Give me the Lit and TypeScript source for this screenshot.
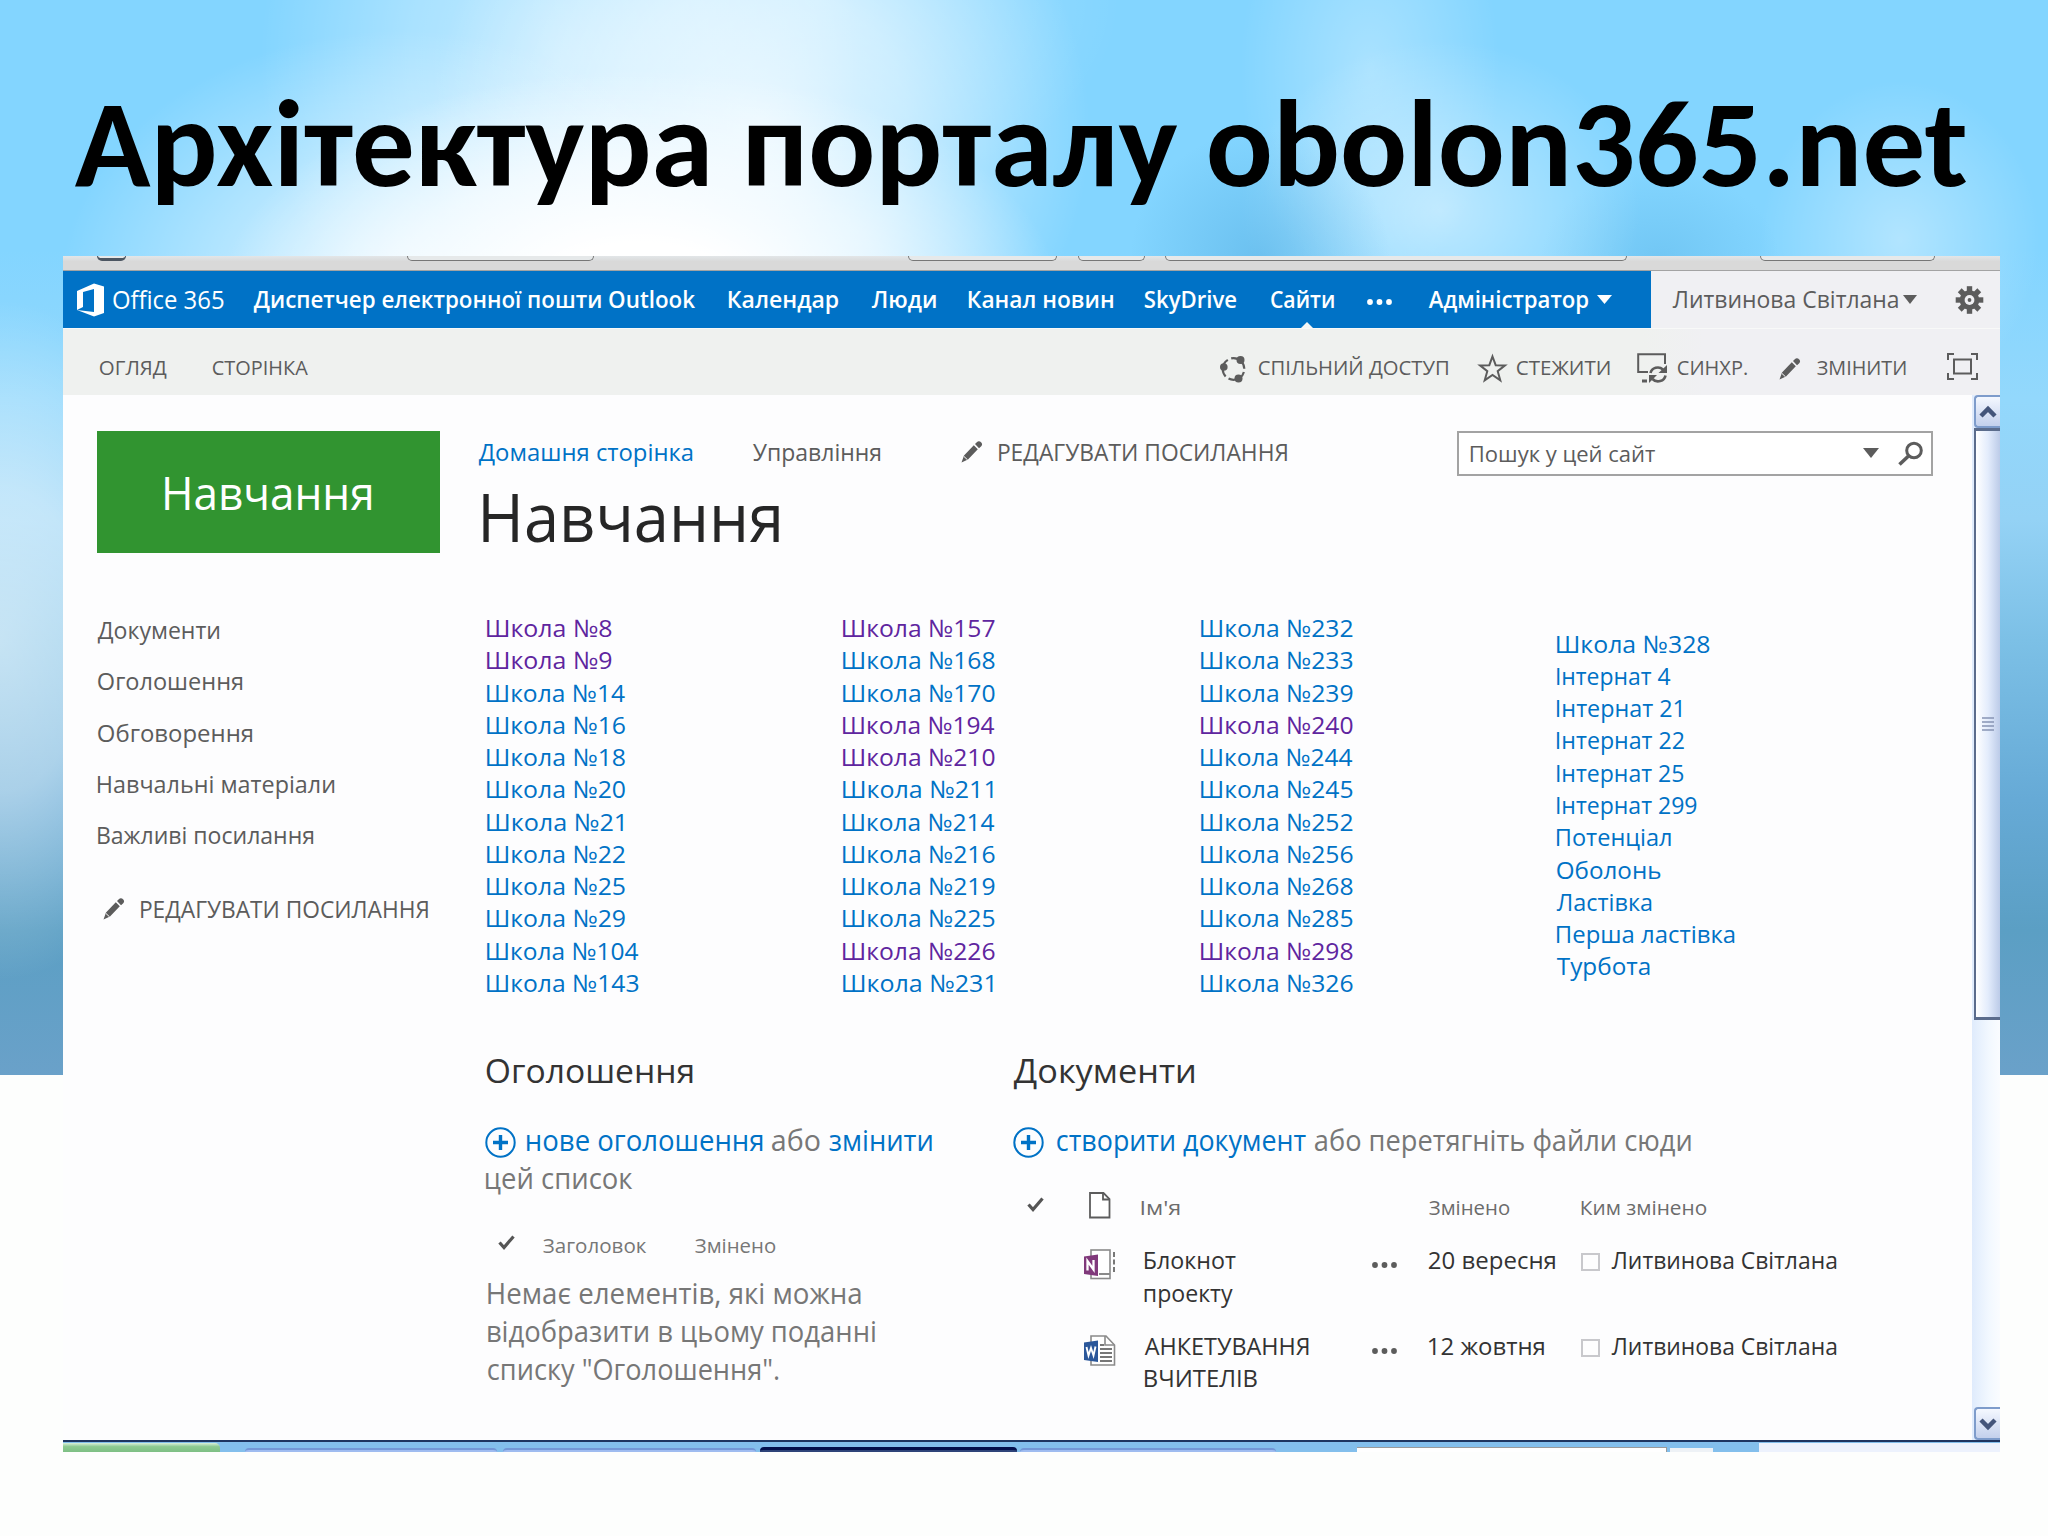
import { LitElement, html, css, svg } from "lit";
import { customElement, property } from "lit/decorators.js";
import { styleMap } from "lit/directives/style-map.js";

const pen = document.createElement("canvas").getContext("2d")!;

/** One line of text whose inked width is fitted to `w` pixels. */
@customElement("fit-text")
class FitText extends LitElement {
  static styles = css`
    :host { display: block; white-space: nowrap; }
    .run { display: block; transform-origin: 0 0; width: max-content; }
  `;
  @property() text = "";
  @property({ type: Number }) w = 0;

  updated() {
    const run = this.renderRoot.querySelector(".run") as HTMLElement;
    const cs = getComputedStyle(this);
    pen.font = `${cs.fontWeight} ${cs.fontSize} ${cs.fontFamily}`;
    const m = pen.measureText(this.text);
    const ink = m.actualBoundingBoxLeft + m.actualBoundingBoxRight;
    const k = this.w / ink;
    run.style.transform = `translateX(${(m.actualBoundingBoxLeft * k + 0.8).toFixed(2)}px) scaleX(${k.toFixed(4)})`;
  }
  render() {
    return html`<span class="run" style=${styleMap({ width: `${this.w}px` })}>${this.text}</span>`;
  }
}

const t = (text: string, w: number, cls = "") =>
  html`<fit-text class=${cls} .text=${text} .w=${w}></fit-text>`;

const pencil = html`<svg class="icon" width="22" height="22" viewBox="0 0 22 22">
  <path fill="#5c5c5c" d="M0.500 21.500 L3 14.500 L12.800 4.200 L16.800 8.200 L7 18.500 Z M14 3 L15.800 1.200 Q18 -0.600 20.300 1.500 Q22 3.600 20 5.500 L18 7.200 Z"/>
  <path d="M3 15.500 L6.500 18.800" stroke="#fff" stroke-width="1"/></svg>`;

const plus = html`<svg class="icon" width="31" height="31" viewBox="0 0 31 31">
  <circle cx="15.500" cy="15.500" r="14.200" fill="none" stroke="#0072c6" stroke-width="2"/>
  <path d="M15.500 8v15M8 15.500h15" stroke="#0072c6" stroke-width="3.400"/></svg>`;

const check = html`<svg class="icon check" width="17" height="15" viewBox="0 0 17 15">
  <path d="M1.500 7.500 L6 12.500 L15.500 1.500" fill="none" stroke="#555" stroke-width="3.200"/></svg>`;

const dots = (color: string) => html`<svg class="icon dots" width="27" height="8" viewBox="0 0 27 8">
  ${[4, 13.5, 23].map((x) => svg`<circle cx=${x} cy="4" r="2.900" fill=${color}/>`)}</svg>`;

const caret = (color: string, w: number, h: number) =>
  html`<svg class="icon" width=${w} height=${h} viewBox="0 0 16 10" preserveAspectRatio="none"><path fill=${color} d="M0 0h16L8 10Z"/></svg>`;

const officeLogo = html`<svg class="icon" width="29" height="34" viewBox="0 0 29 34">
  <path fill="#fff" d="M1 8 L18 0.500 L28 3.500 V30 L18 33.500 L1 27 L18 29 V6 L7 9 V24 L1 27 Z"/></svg>`;

const gear = html`<svg class="icon" width="29" height="28" viewBox="-14.500 -14 29 28">
  ${[0, 45, 90, 135].map((a) => svg`<rect x="-2.700" y="-13.800" width="5.400" height="27.600" fill="#5c5c5c" transform="rotate(${a})"/>`)}
  <circle r="7.300" fill="none" stroke="#5c5c5c" stroke-width="5"/><circle r="4.900" fill="#f0f0f3"/>
  <circle r="1.900" fill="#5c5c5c"/></svg>`;

const share = html`<svg class="icon" width="27" height="28" viewBox="0 0 27 28">
  <circle cx="13.500" cy="14" r="10.800" fill="none" stroke="#5c5c5c" stroke-width="2.200" stroke-dasharray="19 3.600" stroke-dashoffset="-3"/>
  <g fill="#5c5c5c"><circle cx="3.800" cy="12" r="3.800"/><circle cx="20.500" cy="5" r="4"/><circle cx="18.500" cy="23.500" r="4"/></g></svg>`;

const star = html`<svg class="icon" width="29" height="29" viewBox="0 0 29 29">
  <path fill="none" stroke="#5c5c5c" stroke-width="2" d="M14.500 2.500 L17.700 11.200 L27 11.400 L19.700 17.200 L22.300 26.300 L14.500 21 L6.700 26.300 L9.300 17.200 L2 11.400 L11.300 11.200 Z"/></svg>`;

const sync = html`<svg class="icon" width="31" height="31" viewBox="0 0 31 31">
  <g fill="none" stroke="#5c5c5c" stroke-width="2"><path d="M11 19H1.200V1.200H28V11"/><path d="M5 28H10" stroke-width="3"/>
  <path stroke-width="2.600" d="M13.500 20a7.500 7 0 0 1 12.500-3.500M28.500 22.500a7.500 7 0 0 1-13 3.500"/></g>
  <path fill="#5c5c5c" d="M30 12v8h-8.500zM12 30v-8h8z"/></svg>`;

const focus = html`<svg class="icon" width="31" height="27" viewBox="0 0 31 27">
  <g fill="none" stroke="#5c5c5c" stroke-width="2"><path d="M7 1H1V7M24 1H30V7M7 26H1V20M24 26H30V20"/><rect x="7" y="6.500" width="17" height="14"/></g></svg>`;

const magnifier = html`<svg class="icon" width="25" height="25" viewBox="0 0 25 25">
  <circle cx="16" cy="9.500" r="7.300" fill="none" stroke="#5c5c5c" stroke-width="3"/><path d="M10.500 15L1.500 23.500" stroke="#5c5c5c" stroke-width="3.600"/></svg>`;

const page = html`<svg class="icon" width="22" height="27" viewBox="0 0 22 27">
  <path fill="#fff" stroke="#5c5c5c" stroke-width="1.800" d="M1 1H14.500L20.500 7V25.500H1Z"/><path fill="none" stroke="#5c5c5c" stroke-width="1.800" d="M14 1V7.500H21"/></svg>`;

const oneNote = html`<svg class="icon" width="32" height="31" viewBox="0 0 32 31">
  <rect x="7" y="1" width="19" height="28.500" fill="#fff" stroke="#8a8a8a" stroke-width="1.600"/>
  <path d="M15 25H26" stroke="#8a8a8a" stroke-width="2"/><path d="M30 3V24" stroke="#777" stroke-width="2" stroke-dasharray="5 2.500"/>
  <path fill="#80397b" d="M0 7.500L14 5.500V27L0 25Z"/><path fill="none" stroke="#fff" stroke-width="2.300" d="M3.500 21.500V12L9.500 20.500V11"/></svg>`;

const word = html`<svg class="icon" width="32" height="31" viewBox="0 0 32 31">
  <path fill="#fff" stroke="#8a8a8a" stroke-width="1.600" d="M7 1H22L30.500 10V30H7Z"/><path d="M21 1V10H30" fill="none" stroke="#8a8a8a" stroke-width="1.600"/>
  <path d="M16 10H20M16 14H28M16 18H28M16 22H28M16 26H28" stroke="#777" stroke-width="1.800"/>
  <path fill="#2b579a" d="M0 7.500L14 5.500V27L0 25Z"/><path fill="none" stroke="#fff" stroke-width="1.900" d="M2.500 12L4.500 20.500L7 13L9.500 20.500L11.500 11.500"/></svg>`;

const visited = new Set(["8", "9", "157", "194", "210", "226", "240", "298"]);
const schools = [
  ["8", "9", "14", "16", "18", "20", "21", "22", "25", "29", "104", "143"],
  ["157", "168", "170", "194", "210", "211", "214", "216", "219", "225", "226", "231"],
  ["232", "233", "239", "240", "244", "245", "252", "256", "268", "285", "298", "326"],
];
const schoolWidth = (n: string) => [0, 125, 138.5, 152][n.length] - (n.endsWith("1") ? 2 : 0);
const others: [string, number][] = [
  ["Школа №328", 153], ["Інтернат 4", 114], ["Інтернат 21", 124.5], ["Інтернат 22", 127.5], ["Інтернат 25", 127],
  ["Інтернат 299", 140], ["Потенціал", 114], ["Оболонь", 103.5], ["Ластівка", 95], ["Перша ластівка", 178], ["Турбота", 93],
];
const sideLinks: [string, number][] = [
  ["Документи", 122], ["Оголошення", 145], ["Обговорення", 155], ["Навчальні матеріали", 237], ["Важливі посилання", 216],
];
const files = [
  { icon: oneNote, name: [["Блокнот", 91], ["проекту", 88]] as [string, number][], date: "20 вересня", dateW: 126 },
  { icon: word, name: [["АНКЕТУВАННЯ", 164], ["ВЧИТЕЛІВ", 112]] as [string, number][], date: "12 жовтня", dateW: 115 },
];

@customElement("app-root")
class AppRoot extends LitElement {
  static styles = css`
    :host { display: block; width: 2048px; height: 1536px; overflow: hidden; background: #fdfefd;
      font-family: "Open Sans", "Noto Sans", sans-serif; color: #5c5c5c; }
    * { box-sizing: border-box; }
    .icon { display: block; overflow: visible; }
    .slide { height: 1536px; background-repeat: no-repeat; background-size: 2048px 1075px;
      background-image:
        radial-gradient(ellipse 420px 230px at 640px 300px, #fff 25%, #ffffffa0 60%, #fff0),
        radial-gradient(ellipse 340px 260px at 400px 290px, #ffffffb0 10%, #ffffff60 55%, #fff0),
        radial-gradient(ellipse 330px 330px at 760px 130px, #ffffffc0, #ffffff80 45%, #fff0),
        radial-gradient(ellipse 300px 330px at 560px 60px, #ffffff80, #ffffff50 50%, #fff0),
        radial-gradient(ellipse 300px 200px at 820px 0px, #ffffff50, #fff0),
        radial-gradient(ellipse 130px 130px at 1260px 260px, #4aa5db70, #4aa5db00),
        radial-gradient(ellipse 200px 170px at 1440px 210px, #ffffff78, #fff0),
        radial-gradient(ellipse 130px 220px at 1370px 70px, #ffffff50, #fff0),
        radial-gradient(ellipse 140px 160px at 1900px 240px, #ffffff60, #fff0),
        radial-gradient(ellipse 120px 90px at 1660px 260px, #5ab4e670, #5ab4e600),
        radial-gradient(ellipse 200px 340px at 0px 640px, #ffffff90, #ffffff70 45%, #fff0),
        linear-gradient(#83d5ff 0, #83d5ff 250px, #93d8fc 400px, #94d2f5 520px, #7cc0e6 640px, #66aad6 800px, #5b9fc4 930px, #6aa1c9 1075px);
    }
    .title { height: 256px; padding: 78px 0 0 74px; font: 700 124px/132px Carlito, Lato, "Open Sans", sans-serif; color: #000; margin: 0; }
    .panel { width: 1937px; margin-left: 63px; background: #fdfdfe; height: 1196px; display: flex; flex-direction: column; }

    .chrome { height: 15px; background: linear-gradient(#e2e6e8, #d9d9d9 40%); border-bottom: 1.500px solid #a3a3a3; display: grid;
      grid-template-columns: 34px 29px 281px 187px 314px 149px 21px 67px 20px 462px 133px 175px; align-items: start; }
    .tab { height: 5px; border: 1.500px solid #777; border-top: 0; border-radius: 0 0 6px 6px; background: #e6e9ea; }
    .tab.dark { border-color: #4c5662; border-bottom-width: 3px; }

    .suite { height: 57px; display: flex; line-height: 57px; }
    .blue { width: 1588px; background: #0072c6; color: #fff; padding-left: 13px; font-size: 23px; font-weight: 600; display: grid;
      grid-template-columns: 36px 141px 475px 143px 97px 176px 126px 96px 62px 169px 54px; align-items: center; }
    .brand { font-size: 26px; font-weight: 400; }
    .blue .dots { margin-top: 5px; }
    .current { position: relative; }
    .current::after { content: ""; position: absolute; left: 31px; bottom: 0; border: 6px solid transparent; border-top: 0; border-bottom: 6px solid #f5f7f6; }
    .user { flex: 1; background: #f0f0f3; padding-left: 21px; display: grid; grid-template-columns: 231px 52px 29px; align-items: center; font-size: 23px; }

    .ribbon { height: 67px; padding: 10px 0 0 36px; font-size: 20.500px; line-height: 55px;
      background: linear-gradient(90deg, #eff1ef 0, #eff1ef 1580px, #f0f0f3 1640px); border-top: 1px solid #f8f9f8;
      display: grid; grid-template-columns: 113px 1008px 38px 220px 38px 120.500px 40.500px 102px 37px 131px 31px; align-items: center; }
    .ribbon .icon { margin-top: 3px; }
    .ribbon .icon:last-child { margin-top: -2px; }

    .content { height: 1045px; display: flex; }
    .side { width: 415px; padding: 36px 0 0 34px; font-size: 24px; line-height: 51.300px; }
    .logo { width: 343px; height: 121.500px; background: #319430; color: #fff; font-size: 46px; line-height: 97px; padding: 13px 0 0 67px; margin-bottom: 51.500px; }
    .edit { display: grid; grid-template-columns: 37px auto; line-height: 36px; align-items: center; }
    .side .edit { margin: 31px 0 0 6px; }
    .center { width: 1494px; padding-top: 36px; }
    .top { height: 45px; display: grid; grid-template-columns: 274px 209px 496px 476px; font-size: 24px; line-height: 36px; align-items: start; }
    .lift { margin-top: 3px; }
    .link { color: #0072c6; }
    .seen { color: #5f259f; }
    .search { height: 45px; border: 2px solid #a3a3a3; background: #fff; display: grid; grid-template-columns: 11px 393px 35px 25px; align-items: center; font-size: 22.500px; line-height: 42px; }
    .search .icon { margin-top: -2px; }
    .head { font-size: 68px; line-height: 80px; color: #262626; padding-left: 4px; margin: 0; font-weight: 400; }
    .schools { margin: 56px 0 0 8px; display: grid; grid-template-columns: 356px 357.500px 356.500px auto; font-size: 24px; line-height: 32.270px; }
    .late { padding-top: 15.700px; }
    .parts { margin: 52px 0 0 7px; display: grid; grid-template-columns: 528px auto; font-size: 28.500px; line-height: 38px; color: #777; }
    .h2 { font-size: 33px; line-height: 40px; color: #333; margin: 0 0 29.500px 1px; font-weight: 400; }
    .docs .h2 { margin-left: 0; }
    .new { display: grid; grid-template-columns: 41px 245px 57px auto; align-items: center; height: 38px; }
    .docs .new { grid-template-columns: 43px 258px auto; }
    .new .icon { margin-top: 5px; }
    .cols { display: grid; grid-template-columns: 13px 44px 152px auto; font-size: 20.500px; line-height: 30px; margin: 33px 0 14.500px; align-items: center; }
    .cols .check { margin-top: -4px; }
    .empty { padding-left: 2px; }
    .row { display: grid; grid-template-columns: 71px 60px 227px 57px 153px 30px 226px; font-size: 23.500px; line-height: 32.500px; color: #333; margin-bottom: 20.600px; align-items: start; }
    .row.th { font-size: 20.500px; line-height: 30px; color: #6c6c6c; margin: 33.500px 0 22px; height: 30px; }
    .row .check { margin: 5px 0 0 14px; }
    .page { margin-left: 5px; }
    .file { margin-top: 5px; }
    .row .dots { margin-top: 17px; }
    .name { margin-left: -3px; }
    .box { width: 19px; height: 18px; border: 2px solid #c8c8cc; margin-top: 9px; }

    .scroll { width: 28px; background: linear-gradient(90deg, #dfebfc, #f2f8ff 60%, #fafcff); padding-left: 2px; display: flex; flex-direction: column; }
    .btn { height: 33px; border: 2px solid #7e9ccb; border-right: 0; border-radius: 4px 0 0 4px; background: linear-gradient(#f4f8ff, #c3d0ec); display: grid; place-items: center; }
    .thumb { height: 592px; border: 2px solid #5b6c8c; border-right: 0; border-top-width: 3px; border-bottom-width: 3px; background: linear-gradient(90deg, #fff, #e3ecfc 50%, #bccbe8); display: grid; place-items: center; }
    .space { flex: 1; }

    .task { height: 12px; border-top: 2.500px solid #1e3560; background: #83bfec; display: grid;
      grid-template-columns: 157px 25px 252px 6px 253px 4px 257px 3px 256px 81px 310px 3px 43px 46px 241px; align-items: end; }
    .start { height: 9.500px; background: linear-gradient(#d9efd9 0, #8dca92 40%, #7dbf84); border-radius: 0 5px 0 0; }
    .item { height: 4px; background: #9fbcf0; border-top: 2px solid #7397d6; border-radius: 4px 4px 0 0; }
    .item.on { height: 5px; background: #2e4479; border-top: 3px solid #04104c; }
    .field { height: 5px; background: #fff; border: 1.500px solid #9a9a9a; border-bottom: 0; border-left: 0; }
    .bit { height: 4px; background: #eef2f6; }
    .tray { height: 9.500px; background: #edf2fd; }
  `;

  render() {
    const g = html`<i></i>`;
    return html`
      <div class="slide">
        <h1 class="title">${t("Архітектура порталу obolon365.net", 1892)}</h1>
        <div class="panel">
          <div class="chrome">
            ${g}<div class="tab dark"></div>${g}<div class="tab"></div>${g}<div class="tab"></div>${g}<div class="tab"></div>${g}<div class="tab"></div>${g}<div class="tab"></div>
          </div>
          <div class="suite">
            <div class="blue">
              ${officeLogo}${t("Office 365", 111, "brand")}
              ${t("Диспетчер електронної пошти Outlook", 442)}${t("Календар", 110)}${t("Люди", 64)}
              ${t("Канал новин", 144)}${t("SkyDrive", 92)}${t("Сайти", 63, "current")}
              ${dots("#fff")}${t("Адміністратор", 160)}${caret("#fff", 15, 9)}
            </div>
            <div class="user">${t("Литвинова Світлана", 225)}${caret("#5c5c5c", 14, 9)}${gear}</div>
          </div>
          <div class="ribbon">
            ${t("ОГЛЯД", 67)}${t("СТОРІНКА", 95)}${share}${t("СПІЛЬНИЙ ДОСТУП", 189)}${star}${t("СТЕЖИТИ", 93)}
            ${sync}${t("СИНХР.", 69)}${pencil}${t("ЗМІНИТИ", 89)}${focus}
          </div>
          <div class="content">
            <div class="side">
              <div class="logo">${t("Навчання", 206.5)}</div>
              ${sideLinks.map(([s, w]) => t(s, w))}
              <div class="edit">${pencil}${t("РЕДАГУВАТИ ПОСИЛАННЯ", 287)}</div>
            </div>
            <div class="center">
              <div class="top">
                ${t("Домашня сторінка", 214, "link lift")}${t("Управління", 128, "lift")}
                <div class="edit lift">${pencil}${t("РЕДАГУВАТИ ПОСИЛАННЯ", 288)}</div>
                <div class="search">${g}${t("Пошук у цей сайт", 185)}${caret("#5c5c5c", 16, 10)}${magnifier}</div>
              </div>
              <h2 class="head">${t("Навчання", 296)}</h2>
              <div class="schools">
                ${schools.map((col) => html`<div>${col.map((n) => t(`Школа №${n}`, schoolWidth(n), visited.has(n) ? "seen" : "link"))}</div>`)}
                <div class="late">${others.map(([s, w]) => t(s, w, "link"))}</div>
              </div>
              <div class="parts">
                <div>
                  <h3 class="h2">${t("Оголошення", 206)}</h3>
                  <div class="new">${plus}${t("нове оголошення", 236, "link")}${t("або", 48)}${t("змінити", 103, "link")}</div>
                  ${t("цей список", 147)}
                  <div class="cols">${g}${check}${t("Заголовок", 104)}${t("Змінено", 81)}</div>
                  <div class="empty">
                    ${t("Немає елементів, які можна", 373)}${t("відобразити в цьому поданні", 388)}${t('списку "Оголошення".', 291)}
                  </div>
                </div>
                <div class="docs">
                  <h3 class="h2">${t("Документи", 181)}</h3>
                  <div class="new">${plus}${t("створити документ", 249, "link")}${t("або перетягніть файли сюди", 376)}</div>
                  <div class="row th">${check}<div class="page">${page}</div>${t("Ім'я", 38, "name")}${g}${t("Змінено", 81)}${t("Ким змінено", 125)}</div>
                  ${files.map((f) => html`<div class="row">
                    ${g}<div class="file">${f.icon}</div>
                    <div>${f.name.map(([s, w]) => t(s, w))}</div>
                    ${dots("#5c5c5c")}${t(f.date, f.dateW)}<div class="box"></div>${t("Литвинова Світлана", 225)}
                  </div>`)}
                </div>
              </div>
            </div>
            <div class="scroll">
              <div class="btn"><svg class="icon" width="18" height="12" viewBox="0 0 18 12"><path d="M2 10L9 3L16 10" fill="none" stroke="#44557a" stroke-width="4.500"/></svg></div>
              <div class="thumb"><svg class="icon" width="12" height="15" viewBox="0 0 12 15"><path d="M0 1H12M0 5H12M0 9H12M0 13H12" stroke="#8694b4" stroke-width="1.500"/></svg></div>
              <div class="space"></div>
              <div class="btn"><svg class="icon" width="18" height="12" viewBox="0 0 18 12"><path d="M2 2L9 9L16 2" fill="none" stroke="#44557a" stroke-width="4.500"/></svg></div>
            </div>
          </div>
          <div class="task">
            <div class="start"></div>${g}<div class="item"></div>${g}<div class="item"></div>${g}<div class="item on"></div>${g}<div class="item"></div>${g}
            <div class="field"></div>${g}<div class="bit"></div>${g}<div class="tray"></div>
          </div>
        </div>
      </div>
    `;
  }
}
